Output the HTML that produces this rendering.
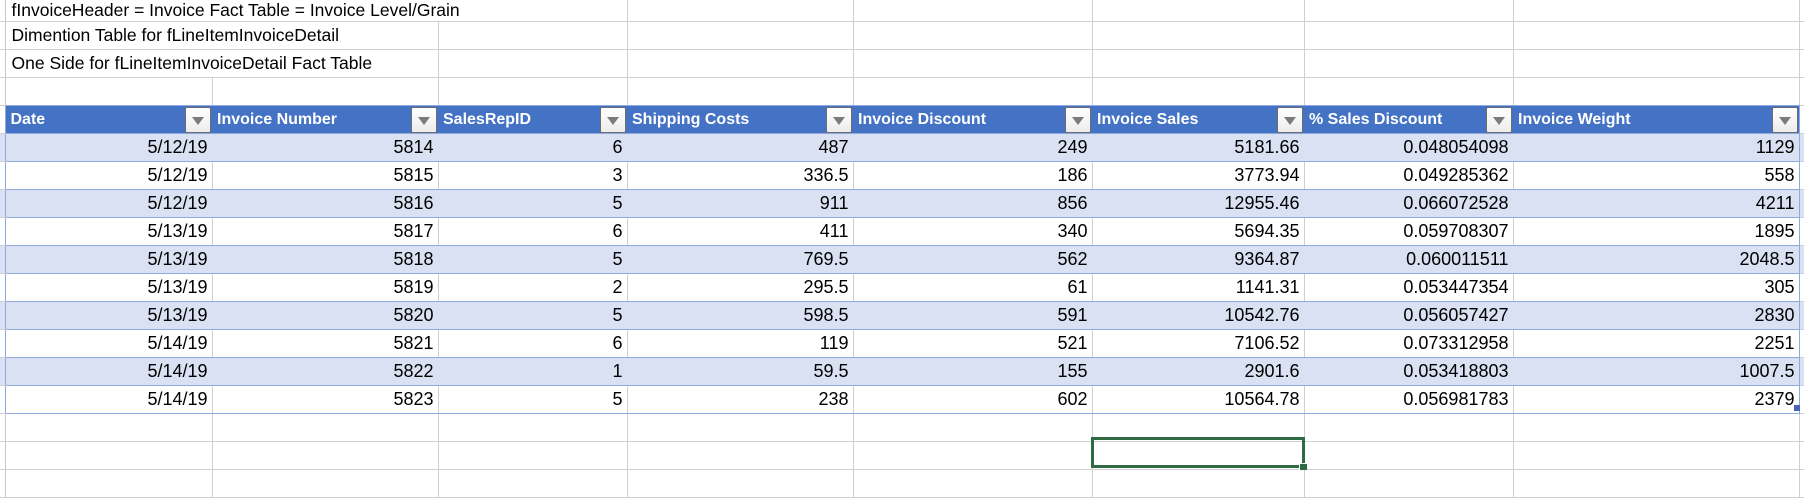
<!DOCTYPE html>
<html><head><meta charset="utf-8"><style>
*{margin:0;padding:0;box-sizing:border-box}
body{width:1804px;height:470px;overflow:hidden;background:#fff;font-family:"Liberation Sans",Arial,sans-serif;position:relative}
table{border-collapse:collapse;table-layout:fixed;position:absolute;left:0;top:0;width:1804px}
td{border-right:1px solid #cfcfcf;border-bottom:1px solid #cfcfcf;height:28px;font-size:18px;color:#000;white-space:nowrap;overflow:visible;padding:0 4px;text-align:right;vertical-align:middle}
td:first-child,td:last-child{padding:0}
tr.t td{text-align:left;font-size:17.5px;padding-left:6px}
tr.t td:first-child{padding:0}
tr.r0 td{height:19px;vertical-align:bottom}
tr.h td{background:#4472c4;color:#fff;font-weight:bold;font-size:16px;text-align:left;position:relative;border-right:none;border-bottom:1px solid #8ea9db;padding-left:5px}
tr.h td.g,tr.d td.g{background:#fff;border-bottom:1px solid #cfcfcf;padding:0}
tr.h td.e,tr.d td.e{background:#fff;border-bottom:1px solid #cfcfcf;padding:0}
tr.d td{border-bottom:1px solid #8ea9db;border-right:1px solid #cfcfcf}
tr.d.b td{background:#d9e1f2;border-right:1px solid #d9e1f2}
td.g{border-right:1px solid #8ea9db !important}
.btn{position:absolute;right:1px;top:1px;width:26px;height:26px;border:1px solid #6d6d6d;background:linear-gradient(#fff,#ececec);border-radius:2px}
.btn:after{content:"";position:absolute;left:6px;top:9px;border-left:6px solid transparent;border-right:6px solid transparent;border-top:8px solid #7b7b7b}
.nb{border-right-color:transparent !important}
</style></head><body>
<table>
<colgroup><col style="width:5px"><col style="width:207px"><col style="width:226px"><col style="width:189px"><col style="width:226px"><col style="width:239px"><col style="width:212px"><col style="width:209px"><col style="width:286px"><col style="width:5px"></colgroup>
<tr class="t r0"><td style="border-right:1px solid #c8c8c8"></td><td class="nb">fInvoiceHeader = Invoice Fact Table = Invoice Level/Grain</td><td class="nb"></td><td></td><td></td><td></td><td></td><td></td><td></td><td></td></tr>
<tr class="t"><td style="border-right:1px solid #c8c8c8"></td><td class="nb">Dimention Table for fLineItemInvoiceDetail</td><td></td><td></td><td></td><td></td><td></td><td></td><td></td><td></td></tr>
<tr class="t"><td style="border-right:1px solid #c8c8c8"></td><td class="nb">One Side for fLineItemInvoiceDetail Fact Table</td><td></td><td></td><td></td><td></td><td></td><td></td><td></td><td></td></tr>
<tr class="t"><td style="border-right:1px solid #c8c8c8"></td><td style="border-bottom-color:#8ea9db"></td><td style="border-bottom-color:#8ea9db"></td><td style="border-bottom-color:#8ea9db"></td><td style="border-bottom-color:#8ea9db"></td><td style="border-bottom-color:#8ea9db"></td><td style="border-bottom-color:#8ea9db"></td><td style="border-bottom-color:#8ea9db"></td><td style="border-bottom-color:#8ea9db"></td><td></td></tr>
<tr class="h"><td class="g"></td><td>Date<span class="btn"></span></td><td>Invoice Number<span class="btn"></span></td><td>SalesRepID<span class="btn"></span></td><td>Shipping Costs<span class="btn"></span></td><td>Invoice Discount<span class="btn"></span></td><td>Invoice Sales<span class="btn"></span></td><td>% Sales Discount<span class="btn"></span></td><td style="border-right:1px solid #8ea9db">Invoice Weight<span class="btn"></span></td><td class="e"></td></tr>
<tr class="d b"><td class="g"></td><td>5/12/19</td><td>5814</td><td>6</td><td>487</td><td>249</td><td>5181.66</td><td>0.048054098</td><td style="border-right:1px solid #8ea9db">1129</td><td class="e"></td></tr>
<tr class="d"><td class="g"></td><td>5/12/19</td><td>5815</td><td>3</td><td>336.5</td><td>186</td><td>3773.94</td><td>0.049285362</td><td style="border-right:1px solid #8ea9db">558</td><td class="e"></td></tr>
<tr class="d b"><td class="g"></td><td>5/12/19</td><td>5816</td><td>5</td><td>911</td><td>856</td><td>12955.46</td><td>0.066072528</td><td style="border-right:1px solid #8ea9db">4211</td><td class="e"></td></tr>
<tr class="d"><td class="g"></td><td>5/13/19</td><td>5817</td><td>6</td><td>411</td><td>340</td><td>5694.35</td><td>0.059708307</td><td style="border-right:1px solid #8ea9db">1895</td><td class="e"></td></tr>
<tr class="d b"><td class="g"></td><td>5/13/19</td><td>5818</td><td>5</td><td>769.5</td><td>562</td><td>9364.87</td><td>0.060011511</td><td style="border-right:1px solid #8ea9db">2048.5</td><td class="e"></td></tr>
<tr class="d"><td class="g"></td><td>5/13/19</td><td>5819</td><td>2</td><td>295.5</td><td>61</td><td>1141.31</td><td>0.053447354</td><td style="border-right:1px solid #8ea9db">305</td><td class="e"></td></tr>
<tr class="d b"><td class="g"></td><td>5/13/19</td><td>5820</td><td>5</td><td>598.5</td><td>591</td><td>10542.76</td><td>0.056057427</td><td style="border-right:1px solid #8ea9db">2830</td><td class="e"></td></tr>
<tr class="d"><td class="g"></td><td>5/14/19</td><td>5821</td><td>6</td><td>119</td><td>521</td><td>7106.52</td><td>0.073312958</td><td style="border-right:1px solid #8ea9db">2251</td><td class="e"></td></tr>
<tr class="d b"><td class="g"></td><td>5/14/19</td><td>5822</td><td>1</td><td>59.5</td><td>155</td><td>2901.6</td><td>0.053418803</td><td style="border-right:1px solid #8ea9db">1007.5</td><td class="e"></td></tr>
<tr class="d"><td class="g"></td><td>5/14/19</td><td>5823</td><td>5</td><td>238</td><td>602</td><td>10564.78</td><td>0.056981783</td><td style="border-right:1px solid #8ea9db">2379</td><td class="e"></td></tr>
<tr><td style="border-right:1px solid #c8c8c8"></td><td></td><td></td><td></td><td></td><td></td><td></td><td></td><td></td><td></td></tr>
<tr><td style="border-right:1px solid #c8c8c8"></td><td></td><td></td><td></td><td></td><td></td><td></td><td></td><td></td><td></td></tr>
<tr><td style="height:4px;border-right:1px solid #c8c8c8"></td><td style="height:4px"></td><td></td><td></td><td></td><td></td><td></td><td></td><td></td><td></td></tr>
</table>
<div style="position:absolute;left:1794px;top:405px;width:6px;height:6px;background:#4a62b8"></div>
<div style="position:absolute;left:1091px;top:437px;width:214px;height:31px;border:3px solid #2e6b42"></div>
<div style="position:absolute;left:1299px;top:463px;width:8px;height:7px;background:#2e6b42;border-left:1px solid #fff;border-top:1px solid #fff"></div>
</body></html>
